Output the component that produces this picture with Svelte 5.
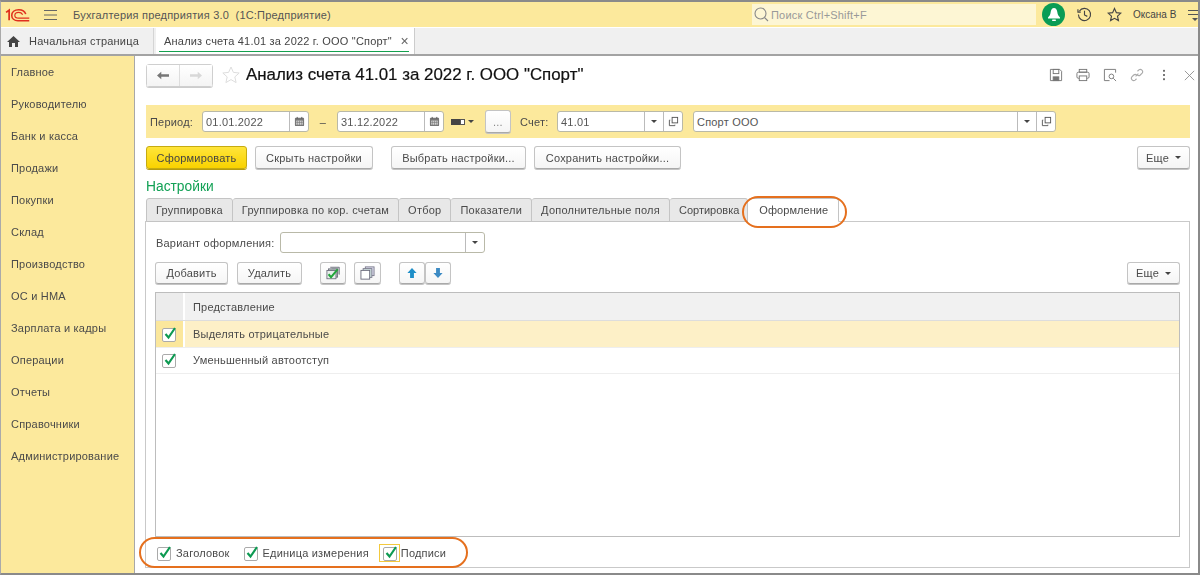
<script>
  const menu = ['Главное','Руководителю','Банк и касса','Продажи','Покупки','Склад','Производство','ОС и НМА','Зарплата и кадры','Операции','Отчеты','Справочники','Администрирование'];
  const tabs = ['Группировка','Группировка по кор. счетам','Отбор','Показатели','Дополнительные поля','Сортировка','Оформление'];
  const rows = [{t:'Выделять отрицательные',cur:true},{t:'Уменьшенный автоотступ',cur:false}];
</script>

{#snippet cal()}
  <span class="fbtn"><svg width="11" height="11" viewBox="0 0 12 12"><rect x="1" y="2" width="10" height="9" rx="1" fill="#777"/><rect x="2.5" y="5" width="7" height="4.5" fill="#ddd"/><path d="M3.5 1v2M8.5 1v2" stroke="#555"/><path d="M4 5v5M6 5v5M8 5v5M2.500 7h7" stroke="#777" stroke-width=".7"/></svg></span>
{/snippet}
{#snippet arrow()}
  <span class="fbtn"><i class="caret"></i></span>
{/snippet}
{#snippet open()}
  <span class="fbtn"><svg width="11" height="11" viewBox="0 0 12 12" fill="none" stroke="#555"><rect x="4.500" y="1.500" width="6" height="6"/><path d="M2.500 4.500h-1v6h6v-1"/></svg></span>
{/snippet}
{#snippet check()}
  <svg class="chk" width="15" height="16" viewBox="0 0 15 16"><rect x=".5" y="2.500" width="13" height="13" rx="1.500" fill="#fff" stroke="#aaa"/><path d="M3.500 8l3 3.500 6.500-9.500" fill="none" stroke="#0d9a52" stroke-width="2.200"/></svg>
{/snippet}

<div class="app">
  <header class="top">
    <svg class="logo" width="26" height="14" viewBox="0 2 28 16" fill="none" stroke="#e0301e"><path d="M1.500 7L5 4.500V16" stroke-width="2"/><path d="M24 9C23 6 20 4 16 4 11 4 8 7 8 10.500 8 14 11 16.500 15 16.500H28" stroke-width="1.800"/><path d="M20.500 9.500C19.500 8 18 7 16 7 13 7 11.500 8.500 11.500 10.500 11.500 12.500 13 13.500 16 13.500H28" stroke-width="1.300"/></svg>
    <svg class="burger" width="13" height="12" viewBox="0 0 13 12" stroke="#666"><path d="M0 1.500h13M0 6h13M0 10.500h13"/></svg>
    <span class="apptitle">Бухгалтерия предприятия 3.0 &nbsp;(1С:Предприятие)</span>
    <div class="search">
      <svg width="15" height="15" viewBox="0 0 15 15" fill="none" stroke="#888" stroke-width="1.100"><circle cx="6.500" cy="6.500" r="5.500"/><path d="M10.500 10.500l3.500 3.500"/></svg>
      <span>Поиск Ctrl+Shift+F</span>
    </div>
    <span class="bell"><svg width="14" height="15" viewBox="0 0 14 15" fill="#fff"><path d="M7 1c2 0 3 2 3.300 4 .3 2.500 1.200 4 2.700 5.500v1H1v-1C2.500 9 3.400 7.500 3.700 5 4 3 5 1 7 1z"/><rect x="5" y="12.500" width="4" height="1.500" rx=".7"/></svg></span>
    <svg class="hist" width="15" height="15" viewBox="0 0 16 16" fill="none" stroke="#444" stroke-width="1.200"><path d="M2.500 4.500A6.500 6.500 0 1 1 1.500 8"/><path d="M1 2.500v3h3" /><path d="M8 4v4.500l3 1.500"/></svg>
    <svg class="star" width="15" height="15" viewBox="0 0 16 16" fill="none" stroke="#444" stroke-width="1.200"><path d="M8 1.500l2 4.500 4.800.5-3.600 3.200 1 4.800L8 12.100l-4.200 2.400 1-4.800L1.200 6.500 6 6z"/></svg>
    <span class="user">Оксана В</span>
    <svg class="menuic" width="13" height="18" viewBox="0 0 13 18" fill="#555"><path d="M0 4h13v1H0zM0 8h13v1H0zM4 12h6l-3 3z"/></svg>
  </header>

  <nav class="tabbar">
    <div class="home">
      <svg width="13" height="11" viewBox="0 0 13 11" fill="#444"><path d="M6.500 0L13 6h-2v5H8V7H5v4H2V6H0z"/></svg>
      <span>Начальная страница</span>
    </div>
    <div class="doc">
      <span>Анализ счета 41.01 за 2022 г. ООО "Спорт"</span>
      <b>×</b>
    </div>
  </nav>

  <div class="body">
    <aside class="side">
      {#each menu as m}<div class="mi">{m}</div>{/each}
    </aside>

    <main class="main">
      <div class="titlebar">
        <div class="nav">
          <span class="navb"><svg width="12" height="9" viewBox="0 0 14 10" fill="#777"><path d="M0 5l5-4.500V3.500h9v3H5v3z"/></svg></span>
          <span class="navb"><svg width="12" height="9" viewBox="0 0 14 10" fill="#d8d8d8"><path d="M14 5L9 .5V3.500H0v3h9v3z"/></svg></span>
        </div>
        <svg class="fav" width="18" height="18" viewBox="0 0 18 18" fill="none" stroke="#ddd"><path d="M9 1l2.400 5.400 5.800.6-4.400 3.900 1.300 5.700L9 13.600l-5.100 3 1.300-5.700L.8 7l5.800-.6z"/></svg>
        <h1>Анализ счета 41.01 за 2022 г. ООО "Спорт"</h1>
        <div class="tools">
          <svg width="14" height="14" viewBox="0 0 15 15" fill="none" stroke="#777"><path d="M1.500 1.500h10l2 2v10h-12z"/><rect x="4.500" y="1.500" width="6" height="4.500"/><rect x="4.500" y="9.500" width="6" height="4" fill="#777"/></svg>
          <svg width="14" height="14" viewBox="0 0 15 15" fill="none" stroke="#777"><rect x="3.500" y="1.500" width="8" height="3"/><rect x="1" y="4.500" width="13" height="6.500" rx="1.500"/><rect x="3.500" y="8.500" width="8" height="5" fill="#fff"/></svg>
          <svg width="14" height="14" viewBox="0 0 15 15" fill="none" stroke="#777"><path d="M13.500 5V1.500h-12v12H7"/><circle cx="9" cy="9" r="2.500"/><path d="M11 11l3 3"/></svg>
          <svg width="14" height="14" viewBox="0 0 15 15" fill="none" stroke="#aaa" stroke-width="1.200"><path d="M6 9l3-3M8 3.500l1.500-1.500a2.500 2.500 0 0 1 3.500 3.500L11 7.500a2.500 2.500 0 0 1-3 .3M7 7.200a2.500 2.500 0 0 0-3 .3L2 9.500A2.500 2.500 0 0 0 5.500 13L7 11.500"/></svg>
          <svg width="14" height="14" viewBox="0 0 15 15" fill="#666"><rect x="6.500" y="2" width="2" height="2"/><rect x="6.500" y="6.500" width="2" height="2"/><rect x="6.500" y="11" width="2" height="2"/></svg>
          <svg width="11" height="11" viewBox="0 0 13 13" stroke="#888"><path d="M1 1l11 11M12 1L1 12"/></svg>
        </div>
      </div>

      <div class="filter">
        <label class="per">Период:</label>
        <div class="field w-date"><span class="val">01.01.2022</span>{@render cal()}</div>
        <span class="dash">–</span>
        <div class="field w-date"><span class="val">31.12.2022</span>{@render cal()}</div>
        <span class="cond"><svg width="14" height="6" viewBox="0 0 14 6"><rect width="9" height="6" fill="#444"/><rect x="9.500" y=".5" width="4" height="5" fill="#fff" stroke="#555"/></svg><i class="caret"></i></span>
        <span class="btn dots">...</span>
        <label class="acc">Счет:</label>
        <div class="field w-acc"><span class="val">41.01</span>{@render arrow()}{@render open()}</div>
        <div class="field w-org"><span class="val">Спорт ООО</span>{@render arrow()}{@render open()}</div>
      </div>

      <div class="actions">
        <span class="btn primary">Сформировать</span>
        <span class="btn hide">Скрыть настройки</span>
        <span class="btn pick">Выбрать настройки...</span>
        <span class="btn save">Сохранить настройки...</span>
        <span class="btn more">Еще <i class="caret"></i></span>
      </div>

      <div class="settings">Настройки</div>

      <div class="tabs">
        {#each tabs as t, i}<span class="tab" class:active={i === 6}>{t}</span>{/each}
      </div>

      <section class="panel">
        <div class="variant">
          <label>Вариант оформления:</label>
          <div class="field w-var"><span class="val"></span>{@render arrow()}</div>
        </div>
        <div class="cmd">
          <span class="btn add">Добавить</span>
          <span class="btn del">Удалить</span>
          <span class="btn ico first"><svg width="15" height="14" viewBox="0 0 18 17"><path d="M5 1.500h11v9" fill="#c9d3cf" stroke="#667"/><rect x="3" y="3.500" width="11" height="10" fill="#b7c3be" stroke="#667"/><rect x="1" y="5.500" width="11" height="10" fill="#e8eeeb" stroke="#667"/><path d="M3 10l3 3.500L14 4" fill="none" stroke="#22a63b" stroke-width="2.400"/></svg></span>
          <span class="btn ico"><svg width="15" height="14" viewBox="0 0 17 16"><rect x="6" y="1" width="10" height="10" fill="#dde" stroke="#778"/><rect x="3.500" y="3" width="10" height="10" fill="#cdd" stroke="#778"/><rect x="1" y="5" width="10" height="10" fill="#fff" stroke="#667"/></svg></span>
          <div class="updown">
            <span class="btn ud"><svg width="10" height="10" viewBox="0 0 12 13" fill="#1f8fc8"><path d="M6 0l6 6.500H8.500V13h-5V6.500H0z"/></svg></span>
            <span class="btn ud"><svg width="10" height="10" viewBox="0 0 12 13" fill="#3d8bc4"><path d="M6 13L0 6.500h3.500V0h5v6.500H12z"/></svg></span>
          </div>
          <span class="btn more">Еще <i class="caret"></i></span>
        </div>
        <div class="table">
          <div class="thead"><span class="c0"></span><span class="c1">Представление</span></div>
          {#each rows as r}
            <div class="row" class:cur={r.cur}><span class="c0">{@render check()}</span><span class="c1">{r.t}</span></div>
          {/each}
        </div>
        <div class="opts">
          <span class="opt">{@render check()}Заголовок</span>
          <span class="opt">{@render check()}Единица измерения</span>
          <span class="opt focus"><span class="fb">{@render check()}</span>Подписи</span>
        </div>
      </section>

      <div class="oval o1"></div>
      <div class="oval o2"></div>
    </main>
  </div>
</div>

<style>
  :global(body){margin:0;background:#fff}
  .app{width:1200px;height:575px;display:flex;flex-direction:column;overflow:hidden;font:11px "Liberation Sans",Arial,sans-serif;letter-spacing:.2px;color:#4a4a4a;box-sizing:border-box;border-top:2px solid #8a8a8a;border-bottom:2px solid #8a8a8a;border-left:1px solid #aaa;border-right:2px solid #8a8a8a;filter:blur(.3px)}
  svg{display:block;flex:none}
  .top{height:26px;flex:none;background:#fce99c;display:flex;align-items:center;border-bottom:1px solid #fff;padding-left:3px;box-sizing:border-box}
  .logo{margin-right:14px}
  .burger{margin-right:16px}
  .apptitle{width:679px;flex:none;white-space:nowrap;color:#555}
  .search{width:284px;flex:none;height:21px;background:#fdf6d4;display:flex;align-items:center;gap:2px;padding-left:2px;box-sizing:border-box;color:#999}
  .bell{width:23px;height:23px;flex:none;border-radius:50%;background:#0a9c55;margin-left:6px;display:flex;align-items:center;justify-content:center}
  .hist{margin-left:12px}
  .star{margin-left:15px}
  .user{margin-left:11px;font-size:10px;letter-spacing:0;color:#444;width:55px;flex:none;white-space:nowrap}
  .tabbar{flex:none;background:#f0f0f0;display:flex;border-bottom:2px solid #a3a3a3;box-sizing:border-box;height:28px}
  .home{width:153px;display:flex;align-items:center;gap:9px;padding-left:6px;box-sizing:border-box;border-right:1px solid #d5d5d5;white-space:nowrap;color:#444}
  .doc{width:259px;background:#fff;display:flex;align-items:center;justify-content:space-between;margin-left:2px;padding:0 5px 0 8px;box-sizing:border-box;border-right:1px solid #ccc;white-space:nowrap;color:#444;position:relative}
  .doc::after{content:"";position:absolute;left:3px;right:5px;bottom:2px;height:1px;background:#14a04e}
  .doc b{font-weight:400;font-size:14px;color:#666}
  .body{flex:1;display:flex;min-height:0}
  .side{width:134px;flex:none;background:#fce99c;border-right:1px solid #a8a8a8;box-sizing:border-box;padding:0 0 0 10px}
  .mi{height:32px;line-height:32px;white-space:nowrap}
  .main{flex:1;position:relative;padding:0 8px 0 11px;min-width:0}
  .titlebar{height:49px;display:flex;align-items:flex-start;padding-top:8px;box-sizing:border-box}
  .nav{display:flex;border:1px solid #cfcfcf;border-radius:3px;box-shadow:0 1px 0 #ccc;margin-right:9px}
  .navb{width:32px;height:21px;display:flex;align-items:center;justify-content:center;background:linear-gradient(#fff,#f4f4f4)}
  .navb:first-child{border-right:1px solid #ddd}
  .fav{margin:2px 6px 0 0}
  h1{margin:0;font-size:16.900px;letter-spacing:0;line-height:22px;font-weight:400;color:#111;-webkit-text-stroke:.2px #111;white-space:nowrap}
  .tools{margin-left:auto;height:22px;display:flex;gap:13px;margin-right:-5px;align-items:center}
  .filter{height:33px;width:1044px;background:#fce99c;display:flex;align-items:center;padding-left:4px;box-sizing:border-box}
  .per{width:52px;flex:none}
  .field{height:21px;background:#fff;border:1px solid #b9b9a8;border-radius:3px;display:flex;align-items:center;box-sizing:border-box;flex:none}
  .val{flex:1;padding-left:3px;color:#555;white-space:nowrap}
  .fbtn{width:18px;height:100%;border-left:1px solid #bbb;display:flex;align-items:center;justify-content:center;flex:none}
  .caret{display:inline-block;width:0;height:0;border:3px solid transparent;border-top:3px solid #444;border-bottom:0}
  .w-date{width:107px}
  .dash{width:28px;flex:none;text-align:center}
  .cond{display:flex;align-items:center;gap:3px;margin-left:7px;width:24px;flex:none}
  .btn{height:23px;display:inline-flex;align-items:center;justify-content:center;box-sizing:border-box;background:linear-gradient(#fff,#f5f5f5);border:1px solid #c4c4c4;border-bottom-color:#a9a9a9;border-radius:3px;box-shadow:0 1px 0 #c4c4c4;color:#4a4a4a;white-space:nowrap;flex:none}
  .dots{width:26px;margin-left:10px;color:#888}
  .acc{margin-left:9px;width:37px;flex:none}
  .w-acc{width:126px}
  .w-org{width:363px;margin-left:10px}
  .actions{display:flex;align-items:center;width:1044px;margin-top:8px;height:23px}
  .primary{width:101px;background:linear-gradient(#ffe53a,#f9d200);border-color:#c6ab10;box-shadow:0 1px 0 #b59c10;color:#444}
  .hide{width:118px;margin-left:8px}
  .pick{width:135px;margin-left:18px}
  .save{width:147px;margin-left:8px}
  .more{width:53px;margin-left:auto;gap:6px}
  .settings{font-size:13.800px;letter-spacing:0;color:#12a155;margin-top:9px;height:20px;line-height:18px}
  .tabs{display:flex;height:24px;position:relative;z-index:1;margin-bottom:-1px}
  .tab{height:24px;display:flex;align-items:center;padding:0 9px;box-sizing:border-box;background:#e8e8e8;border:1px solid #c4c4c4;border-left:0;border-radius:3px 3px 0 0;white-space:nowrap;letter-spacing:.24px}
  .tab:first-child{border-left:1px solid #c4c4c4}
  .tab:nth-child(6){letter-spacing:0;padding-right:8px}
  .tab.active{background:#fff;border-bottom-color:#fff;padding:0 10px 0 11px;letter-spacing:.05px}
  .panel{width:1045px;height:347px;margin-left:-1px;border:1px solid #c9c9c9;box-sizing:border-box;padding:10px 9px 0 9px}
  .variant{display:flex;align-items:center;height:21px}
  .variant label{width:125px;padding-left:1px;flex:none;box-sizing:border-box}
  .w-var{width:205px}
  .cmd{display:flex;align-items:center;margin-top:9px;height:22px}
  .cmd .btn{height:22px}
  .add{width:73px}
  .del{width:65px;margin-left:9px}
  .ico{width:26px}
  .first{margin-left:18px}
  .ico + .ico{margin-left:8px;width:27px}
  .updown{display:flex;margin-left:18px}
  .ud{width:26px}
  .table{margin-top:8px;height:245px;border:1px solid #bdbdbd;box-sizing:border-box}
  .thead{display:flex;height:27px;background:#f1f1f1;border-bottom:1px solid #ddd;align-items:center}
  .thead .c0{border-right:2px solid #fff;background:#ececec}
  .row{display:flex;height:25.500px;align-items:center;border-bottom:1px solid #eee}
  .row.cur{background:#fdf0c7}
  .row.cur .c0{background:#fbe79c}
  .c0{width:29px;height:100%;flex:none;display:flex;align-items:center;justify-content:center;box-sizing:border-box}
  .c1{padding-left:8px}
  .row .c0{border-right:2px solid #fff}
  .opts{display:flex;align-items:center;margin-top:3px;padding-left:2px;height:26px}
  .opt{display:flex;align-items:center;gap:4px;margin-right:14px}
  .opt:nth-child(2){margin-right:10px}
  .opt.focus{gap:1px}
  .fb{border:1px solid #f3c93e;padding:0 1px 0 3px;display:block}
  .oval{position:absolute;border:2px solid #e5701e;border-radius:999px;box-sizing:border-box;pointer-events:none;z-index:2}
  .o1{left:607px;top:140px;width:105px;height:32px;border-radius:16px}
  .o2{left:4px;top:481px;width:329px;height:31px}
</style>
